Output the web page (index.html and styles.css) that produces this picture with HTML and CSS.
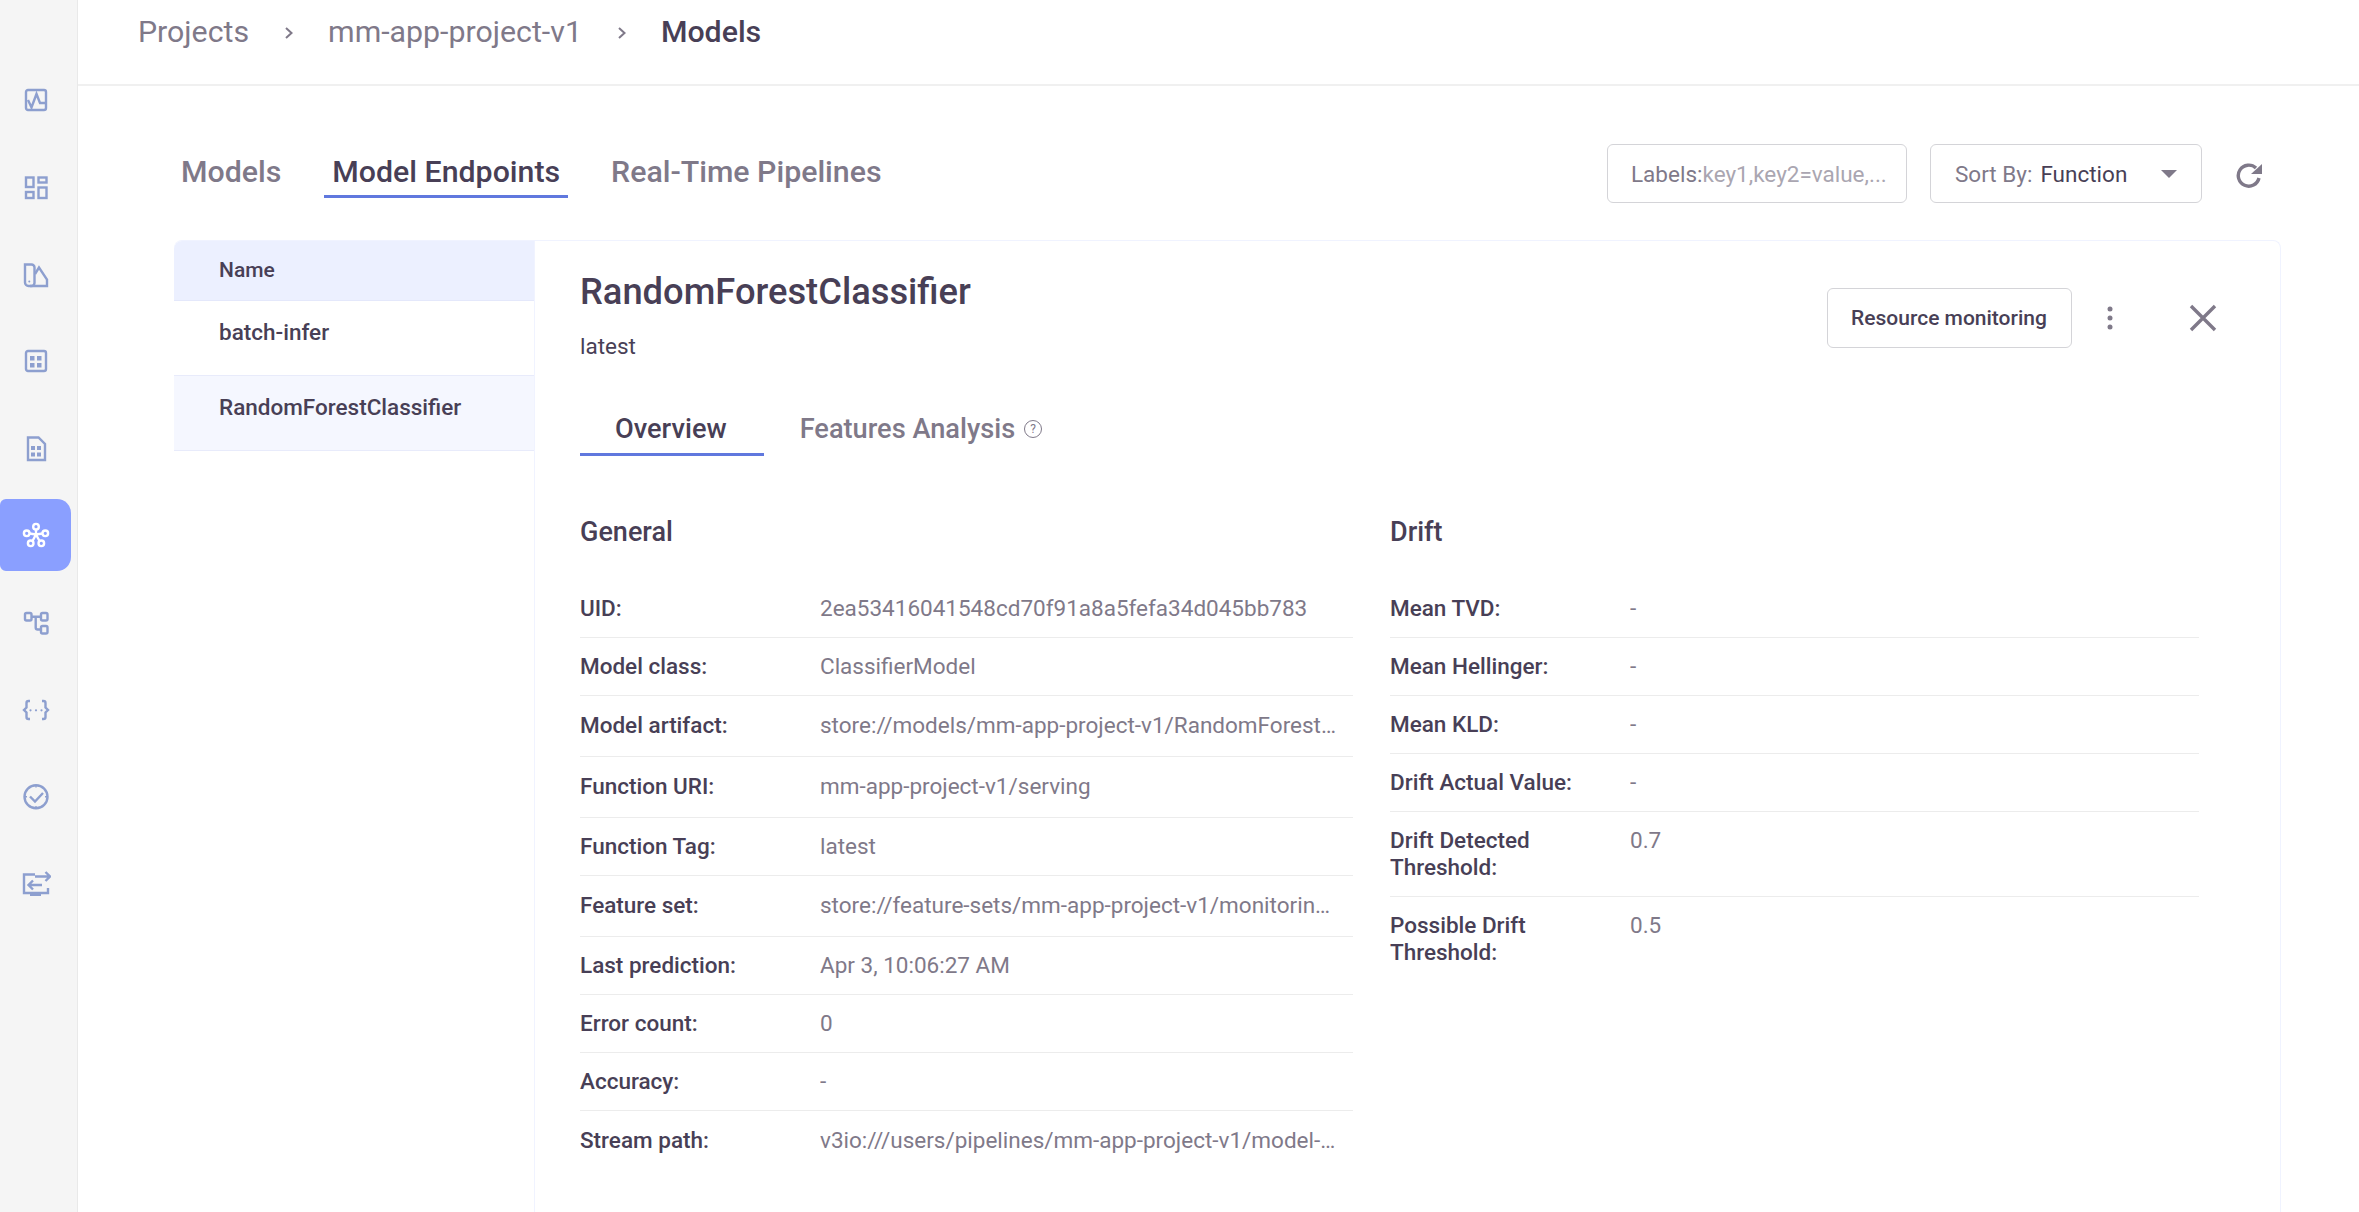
FILE: index.html
```html
<!DOCTYPE html>
<html lang="en">
	<head>
		<meta charset="UTF-8" />
		<meta name="viewport" content="width=device-width, initial-scale=1.0" />
		<title>Model Endpoints</title>
		<link rel="stylesheet" href="styles.css">
	</head>
	<body>
		<nav class="sidebar">
			<a class="nav-item">
				<svg class="nav-icon" viewBox="0 0 30 30"><rect x="5" y="5" width="20" height="20" rx="2"/><path d="M7 15l3.500 7.500L15.500 9l3.500 9H25"/></svg>
			</a>
			<a class="nav-item">
				<svg class="nav-icon" viewBox="0 0 30 30"><rect x="5" y="5.500" width="7.500" height="9.500" /><rect x="17.500" y="5.500" width="8" height="5"/><rect x="5" y="20" width="7.500" height="6"/><rect x="17.500" y="15.500" width="8" height="10.500"/></svg>
			</a>
			<a class="nav-item">
				<svg class="nav-icon" viewBox="0 0 30 30"><path d="M4 5.500h6.500a3 3 0 0 1 3 3V24a3 3 0 0 1-3 3H7.500A3.500 3.500 0 0 1 4 23.500z"/><path d="M14 15l4-6.500 8 12V27H9"/><circle class="nav-fill" cx="8.300" cy="22.500" r="1"/></svg>
			</a>
			<a class="nav-item">
				<svg class="nav-icon" viewBox="0 0 30 30"><rect x="5" y="5" width="20" height="20" rx="2"/><rect class="nav-fill" x="9" y="10" width="4.500" height="4.500"/><rect class="nav-fill" x="16" y="10" width="4.500" height="4.500"/><rect class="nav-fill" x="9" y="17" width="4.500" height="4.500"/><rect class="nav-fill" x="16" y="17" width="4.500" height="4.500"/></svg>
			</a>
			<a class="nav-item">
				<svg class="nav-icon" viewBox="0 0 30 30"><path d="M7 4.500h10.500L24 11v16H7z"/><rect class="nav-fill" x="10" y="13" width="4" height="4"/><rect class="nav-fill" x="16" y="13" width="4" height="4"/><rect class="nav-fill" x="10" y="19.500" width="4" height="4"/><rect class="nav-fill" x="16" y="19.500" width="4" height="4"/></svg>
			</a>
			<a class="nav-item active">
				<svg class="nav-icon" viewBox="0 0 30 30"><path d="M15 14.500V9.500M15 14.500l-6.500-1M15 14.500l6.500-1M15 14.500l-3.500 6.500M15 14.500l3.500 6.500"/><circle cx="15" cy="6.700" r="2.800"/><circle cx="5.700" cy="13.300" r="2.800"/><circle cx="24.300" cy="13.300" r="2.800"/><circle cx="9.700" cy="23.300" r="2.800"/><circle cx="20.300" cy="23.300" r="2.800"/></svg>
			</a>
			<a class="nav-item">
				<svg class="nav-icon" viewBox="0 0 30 30"><rect x="4" y="6" width="6.500" height="7.500" rx="1.500"/><rect x="20" y="6" width="6.500" height="7.500" rx="1.500"/><rect x="20" y="19" width="6.500" height="7.500" rx="1.500"/><path d="M10.500 9.700H20M14.700 9.700V20.500a2 2 0 0 0 2 2H20"/></svg>
			</a>
			<a class="nav-item">
				<svg class="nav-icon" viewBox="0 0 30 30"><path d="M9 7H7.500a2 2 0 0 0-2 2v4.500L3 16l2.500 2.500V23a2 2 0 0 0 2 2H9"/><path d="M21 7h1.500a2 2 0 0 1 2 2v4.500L27 16l-2.500 2.500V23a2 2 0 0 1-2 2H21"/><circle class="nav-fill" cx="9.500" cy="16.300" r="1.100"/><circle class="nav-fill" cx="15" cy="16.300" r="1.100"/><circle class="nav-fill" cx="20.500" cy="16.300" r="1.100"/></svg>
			</a>
			<a class="nav-item">
				<svg class="nav-icon" viewBox="0 0 30 30"><circle cx="15" cy="15.700" r="11.500"/><path d="M9 15.500l5 5 8-8.500"/><path class="nav-thin" d="M15 4.500v2M15 25v2M4 15.700h2M24 15.700h2"/></svg>
			</a>
			<a class="nav-item">
				<svg class="nav-icon" viewBox="0 0 30 30"><path d="M14 6.500H3V25h24v-5"/><path d="M14 8.500h14.500M24.500 4l4.500 4.500-4.500 4.500"/><path d="M7.500 17H21M12 12.500L7.500 17l4.500 4.500"/><path class="nav-thick" d="M9 26.500h11"/></svg>
			</a>
		</nav>

		<div class="page">
			<header class="breadcrumbs">
				<span class="crumb">Projects</span>
				<svg class="crumb-sep" viewBox="0 0 10 14"><path d="M2 2l5.500 5L2 12"/></svg>
				<span class="crumb">mm-app-project-v1</span>
				<svg class="crumb-sep" viewBox="0 0 10 14"><path d="M2 2l5.500 5L2 12"/></svg>
				<span class="crumb current">Models</span>
			</header>

			<main class="content">
				<div class="action-bar">
					<div class="page-tabs">
						<a class="page-tab">Models</a>
						<a class="page-tab active">Model Endpoints</a>
						<a class="page-tab">Real-Time Pipelines</a>
					</div>
					<div class="filters">
						<div class="field labels-field">Labels:<span class="placeholder">key1,key2=value,...</span></div>
						<div class="field sort-field">
							<span>Sort By:</span>
							<span class="sort-value">Function</span>
							<span class="caret"></span>
						</div>
						<svg class="refresh" viewBox="0 0 28 28"><path d="M24 18a10.500 10.500 0 1 1-3-10"/><path class="refresh-head" d="M27 4v10H16z"/></svg>
					</div>
				</div>

				<section class="panel">
					<div class="list">
						<div class="list-head">Name</div>
						<div class="list-row">batch-infer</div>
						<div class="list-row selected">RandomForestClassifier</div>
					</div>

					<div class="details">
						<div class="details-head">
							<div>
								<h2 class="details-title">RandomForestClassifier</h2>
								<div class="details-tag">latest</div>
							</div>
							<div class="details-actions">
								<button class="btn">Resource monitoring</button>
								<svg class="kebab" viewBox="0 0 28 28"><circle cx="14" cy="5" r="2.500"/><circle cx="14" cy="14" r="2.500"/><circle cx="14" cy="23" r="2.500"/></svg>
								<svg class="close" viewBox="0 0 28 28"><path d="M2 2l24 24M26 2L2 26"/></svg>
							</div>
						</div>

						<div class="details-tabs">
							<a class="details-tab active">Overview</a>
							<a class="details-tab with-tip">Features Analysis <span class="tip">?</span></a>
						</div>

						<div class="overview">
							<div>
								<h3 class="section-title">General</h3>
								<div class="info-row"><div class="info-key">UID:</div><div class="info-value">2ea53416041548cd70f91a8a5fefa34d045bb783</div></div>
								<div class="info-row"><div class="info-key">Model class:</div><div class="info-value">ClassifierModel</div></div>
								<div class="info-row tall"><div class="info-key">Model artifact:</div><div class="info-value">store://models/mm-app-project-v1/RandomForestClassifier:latest</div></div>
								<div class="info-row tall"><div class="info-key">Function URI:</div><div class="info-value">mm-app-project-v1/serving</div></div>
								<div class="info-row"><div class="info-key">Function Tag:</div><div class="info-value">latest</div></div>
								<div class="info-row tall"><div class="info-key">Feature set:</div><div class="info-value">store://feature-sets/mm-app-project-v1/monitoring-serving:latest</div></div>
								<div class="info-row"><div class="info-key">Last prediction:</div><div class="info-value">Apr 3, 10:06:27 AM</div></div>
								<div class="info-row"><div class="info-key">Error count:</div><div class="info-value">0</div></div>
								<div class="info-row"><div class="info-key">Accuracy:</div><div class="info-value">-</div></div>
								<div class="info-row tall last"><div class="info-key">Stream path:</div><div class="info-value">v3io:///users/pipelines/mm-app-project-v1/model-endpoints/stream</div></div>
							</div>
							<div>
								<h3 class="section-title">Drift</h3>
								<div class="info-row"><div class="info-key">Mean TVD:</div><div class="info-value">-</div></div>
								<div class="info-row"><div class="info-key">Mean Hellinger:</div><div class="info-value">-</div></div>
								<div class="info-row"><div class="info-key">Mean KLD:</div><div class="info-value">-</div></div>
								<div class="info-row"><div class="info-key">Drift Actual Value:</div><div class="info-value">-</div></div>
								<div class="info-row"><div class="info-key narrow">Drift Detected Threshold:</div><div class="info-value">0.7</div></div>
								<div class="info-row last"><div class="info-key narrow">Possible Drift Threshold:</div><div class="info-value">0.5</div></div>
							</div>
						</div>
					</div>
				</section>
			</main>
		</div>
	</body>
</html>
```

FILE: styles.css
```css
html,
body {
	height: 100%;
}
body {
	font-family: Roboto, Arial, sans-serif;
	font-size: 22.5px;
	color: #483f56;
	background-color: white;
	margin: 0;
	display: flex;
	overflow: hidden;
}
.sidebar {
	width: 77px;
	flex-shrink: 0;
	background-color: #f5f5f5;
	border-right: 1px solid #e9e9e9;
	padding-top: 64px;
	display: flex;
	flex-direction: column;
	gap: 15px;
}
.nav-item {
	width: 71px;
	height: 72px;
	display: flex;
	align-items: center;
	justify-content: center;
}
.nav-item.active {
	background-color: #8a9fff;
	border-radius: 6px 14px 14px 6px;
}
.nav-icon {
	width: 30px;
	height: 30px;
	fill: none;
	stroke: #8d9fcf;
	stroke-width: 2.4;
	margin-bottom: 1px;
}
.nav-icon .nav-fill {
	fill: #8d9fcf;
	stroke: none;
}
.nav-icon .nav-thin {
	stroke-width: 1.4;
}
.nav-icon .nav-thick {
	stroke-width: 3;
}
.nav-item.active .nav-icon {
	stroke: white;
}
.page {
	flex: 1;
	min-width: 0;
	display: flex;
	flex-direction: column;
}
.breadcrumbs {
	height: 86px;
	flex-shrink: 0;
	box-sizing: border-box;
	border-bottom: 2px solid #f0f0f0;
	padding: 13px 0 0 60px;
	display: flex;
	align-items: flex-start;
	font-size: 30.3px;
	line-height: 38px;
	color: #7f7989;
}
.crumb.current {
	font-weight: 500;
	color: #483f56;
}
.crumb-sep {
	width: 10px;
	height: 14px;
	margin: 13px 34px 0 35px;
	fill: none;
	stroke: #7f7989;
	stroke-width: 2;
}
.content {
	flex: 1;
	min-height: 0;
	padding: 58px 78px 0 96px;
	display: flex;
	flex-direction: column;
}
.action-bar {
	display: flex;
	justify-content: space-between;
	margin-bottom: 37px;
}
.page-tabs {
	display: flex;
	gap: 35px;
	margin: 9px 0 0 -1px;
	align-items: flex-start;
}
.page-tab {
	padding: 0 8px 5px;
	border-bottom: 3px solid transparent;
	font-size: 30.3px;
	line-height: 37px;
	font-weight: 500;
	color: #7f7989;
}
.page-tab.active {
	color: #483f56;
	border-bottom-color: #6078de;
}
.filters {
	display: flex;
	align-items: center;
	gap: 23px;
}
.field {
	height: 59px;
	box-sizing: border-box;
	border: 1px solid #d4d4d8;
	border-radius: 6px;
	padding: 0 24px;
	display: flex;
	align-items: center;
	color: #7f7989;
	white-space: nowrap;
}
.labels-field {
	width: 300px;
	padding-left: 23px;
}
.placeholder {
	color: #aaa6b1;
}
.sort-field {
	width: 272px;
}
.sort-value {
	margin-left: 8px;
	color: #483f56;
}
.caret {
	margin-left: 34px;
	border-left: 8px solid transparent;
	border-right: 8px solid transparent;
	border-top: 8px solid #7f7989;
}
.refresh {
	width: 28px;
	height: 28px;
	margin: 0 18px 0 10px;
	fill: none;
	stroke: #7f7989;
	stroke-width: 3.4;
}
.refresh-head {
	fill: #7f7989;
	stroke: none;
}
.panel {
	flex: 1;
	min-height: 0;
	display: flex;
	border: 1px solid #f0f3ff;
	border-left: 0;
	border-bottom: 0;
	border-radius: 8px 8px 0 0;
}
.list {
	width: 360px;
	flex-shrink: 0;
}
.list-head {
	height: 60px;
	box-sizing: border-box;
	background-color: #ecf0ff;
	border-bottom: 1px solid #e4e8fb;
	border-radius: 8px 0 0 0;
	padding: 0 45px;
	font-size: 21px;
	font-weight: 500;
	line-height: 59px;
}
.list-row {
	height: 75px;
	box-sizing: border-box;
	border-bottom: 1px solid #e8ebfb;
	padding: 17px 45px 0;
	font-weight: 500;
	line-height: 28px;
}
.list-row.selected {
	background-color: #f5f7ff;
}
.details {
	flex: 1;
	min-width: 0;
	border-left: 1px solid #f0f3ff;
	padding: 30px 63.5px 0 45px;
}
.details-head {
	display: flex;
	justify-content: space-between;
}
.details-title {
	margin: 0;
	font-size: 36.3px;
	line-height: 42px;
	font-weight: 500;
}
.details-tag {
	margin-top: 20px;
	line-height: 27px;
}
.details-actions {
	display: flex;
	align-items: center;
	margin-top: 17px;
	height: 60px;
}
.btn {
	height: 60px;
	width: 245px;
	background-color: white;
	border: 1px solid #d4d4d8;
	border-radius: 6px;
	font-family: inherit;
	font-size: 21px;
	font-weight: 500;
	color: #483f56;
}
.kebab {
	width: 28px;
	height: 28px;
	margin-left: 24px;
	fill: #7f7989;
}
.close {
	width: 28px;
	height: 28px;
	margin-left: 65px;
	fill: none;
	stroke: #7f7989;
	stroke-width: 3.4;
}
.details-tabs {
	display: flex;
	margin-top: 51px;
}
.details-tab {
	padding: 0 37px 6px 35px;
	border-bottom: 3px solid transparent;
	font-size: 27.2px;
	line-height: 36px;
	font-weight: 500;
	color: #7f7989;
}
.details-tab.active {
	color: #483f56;
	border-bottom-color: #6078de;
}
.with-tip {
	display: flex;
	align-items: center;
	gap: 9px;
	padding-left: 36px;
}
.tip {
	width: 16px;
	height: 16px;
	border: 1.5px solid #7f7989;
	border-radius: 50%;
	font-size: 12px;
	line-height: 16px;
	text-align: center;
	font-weight: 400;
}
.overview {
	display: grid;
	grid-template-columns: 773px 1fr;
	gap: 37px;
	margin-top: 60px;
	padding-right: 17.5px;
}
.section-title {
	margin: 0 0 32px;
	font-size: 27px;
	line-height: 32px;
	font-weight: 500;
}
.info-row {
	display: flex;
	padding: 15px 0;
	line-height: 27px;
	border-bottom: 1px solid #ececec;
}
.info-row.tall {
	padding: 14px 0 16px;
	line-height: 30px;
}
.info-row.last {
	border-bottom: 0;
}
.info-key {
	width: 240px;
	flex-shrink: 0;
	font-weight: 500;
}
.info-key.narrow {
	padding-right: 60px;
	box-sizing: border-box;
}
.info-value {
	min-width: 0;
	padding-right: 16px;
	color: #7f7989;
	white-space: nowrap;
	overflow: hidden;
	text-overflow: ellipsis;
}
```
